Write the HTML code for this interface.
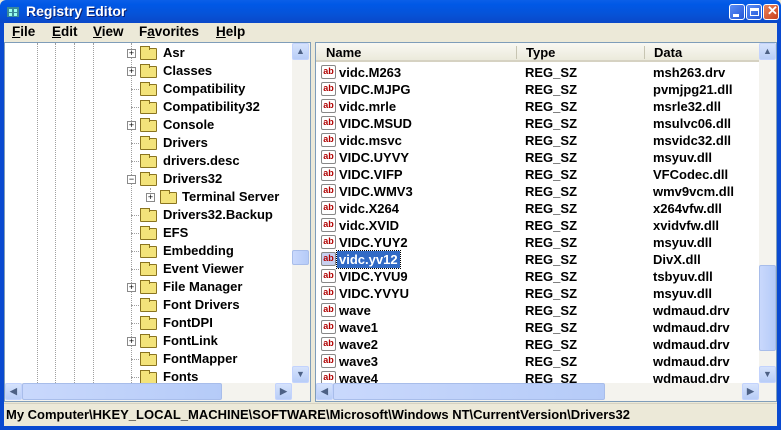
<!DOCTYPE html>
<html><head><meta charset="utf-8"><style>
*{margin:0;padding:0;box-sizing:border-box}
body{width:781px;height:430px;overflow:hidden;background:#ece9d8;font-family:Tahoma,"Liberation Sans",sans-serif;font-weight:bold;font-size:13px;color:#000;position:relative}
.abs{position:absolute}
#title{left:0;top:0;width:781px;height:23px;background:linear-gradient(#0a5fe8,#0058e6 20%,#0653d8 60%,#0a48c8);border-radius:6px 6px 0 0}
#title span{position:absolute;left:26px;top:3px;color:#fff;font-size:14px;font-family:"Liberation Sans",sans-serif;text-shadow:1px 1px #0a1e70}
.btn{position:absolute;top:4px;width:16px;height:16px;border:1px solid #fff;border-radius:3px;background:linear-gradient(135deg,#5b8cf5,#2459d8)}
#frameL{left:0;top:23px;width:4px;height:407px;background:#0a4ad0}
#frameR{left:777px;top:23px;width:4px;height:407px;background:#0a4ad0}
#frameB{left:0;top:426px;width:781px;height:4px;background:#0a4ad0}
#menu{left:4px;top:24px;height:18px}
#menu span{position:absolute;top:0;font-family:"Liberation Sans",sans-serif;font-size:13.5px;font-weight:bold}
.pane{background:#fff;border:1px solid #7f9db9}
.row{position:absolute;height:18px;line-height:18px;white-space:nowrap}
.fold{position:absolute;width:17px;height:12px;top:3px;background:#f3e37a;border:1px solid #8a7420;border-radius:1px}
.fold:before{content:"";position:absolute;left:-1px;top:-3px;width:8px;height:3px;background:#f3e37a;border:1px solid #8a7420;border-bottom:none}
.pl{position:absolute;width:9px;height:9px;border:1px solid #8a8a8a;background:#fff;font-size:9px;line-height:7px;text-align:center;font-weight:normal}
.dot{position:absolute;border-left:1px dotted #a0a0a0}
.hd{position:absolute;border-top:1px dotted #a0a0a0;width:10px}
.ab{position:absolute;width:15px;height:14px;top:2px;border:1px solid #888;border-radius:2px;background:#fff;color:#b00000;font-size:9px;line-height:11px;text-align:center;font-family:"Liberation Sans",sans-serif}
.sb{background:#f4f3ee}
.arr{position:absolute;width:17px;height:17px;background:linear-gradient(#d6e3fc,#b8cdf7);border:1px solid #c3d3fd;border-radius:2px;color:#4d6185;font-size:9px;text-align:center;line-height:15px}
.thumb{position:absolute;background:linear-gradient(90deg,#c9d8fc,#b5cbf8);border:1px solid #a8bdea;border-radius:2px}
</style></head><body>
<div id="title" class="abs">
<svg class="abs" style="left:5px;top:3px" width="17" height="17"><rect x="2" y="4" width="12" height="10" fill="#3a8a9a"/><rect x="4" y="6" width="3" height="3" fill="#9fe"/><rect x="9" y="6" width="3" height="3" fill="#9fe"/><rect x="4" y="10" width="3" height="3" fill="#9fe"/><rect x="9" y="10" width="3" height="3" fill="#9fe"/></svg>
<span>Registry Editor</span>
<div class="btn" style="left:729px"><div class="abs" style="left:3px;top:9px;width:6px;height:3px;background:#fff"></div></div>
<div class="btn" style="left:746px"><div class="abs" style="left:3px;top:3px;width:9px;height:8px;border:1px solid #fff;border-top-width:3px"></div></div>
<div class="btn" style="left:763px;background:linear-gradient(135deg,#e8845c,#c8401c)"><span style="left:3px;top:-2px;font-size:13px;text-shadow:none">✕</span></div>
</div>
<div id="frameL" class="abs"></div><div id="frameR" class="abs"></div><div id="frameB" class="abs"></div>
<div id="menu" class="abs">
<span style="left:8px"><u>F</u>ile</span><span style="left:48px"><u>E</u>dit</span><span style="left:89px"><u>V</u>iew</span><span style="left:135px">F<u>a</u>vorites</span><span style="left:212px"><u>H</u>elp</span>
</div>

<div class="abs pane" style="left:4px;top:42px;width:307px;height:360px"></div>
<div class="abs" style="left:5px;top:43px;width:287px;height:340px;overflow:hidden">
<div class="dot" style="left:32px;top:0;height:340px"></div>
<div class="dot" style="left:50px;top:0;height:340px"></div>
<div class="dot" style="left:69px;top:0;height:340px"></div>
<div class="dot" style="left:88px;top:0;height:340px"></div>
<div class="dot" style="left:126px;top:0;height:340px"></div>
<div class="dot" style="left:145px;top:145px;height:12px"></div>
</div>
<div class="abs" style="left:0;top:0" id="tree"></div>

<div class="abs pane" style="left:315px;top:42px;width:462px;height:360px"></div>
<div class="abs" style="left:316px;top:43px;width:443px;height:19px;background:linear-gradient(#f9f8f3,#ebeadb);border-bottom:2px solid #d6d2c2">
<span class="abs" style="left:10px;top:2px">Name</span>
<div class="abs" style="left:200px;top:3px;height:13px;border-left:1px solid #c7c5b2"></div>
<span class="abs" style="left:210px;top:2px">Type</span>
<div class="abs" style="left:328px;top:3px;height:13px;border-left:1px solid #c7c5b2"></div>
<span class="abs" style="left:338px;top:2px">Data</span>
</div>
<div id="list"></div>

<div class="abs sb" style="left:292px;top:43px;width:18px;height:340px"></div>
<div class="arr" style="left:292px;top:43px">▲</div>
<div class="arr" style="left:292px;top:366px">▼</div>
<div class="thumb" style="left:292px;top:250px;width:17px;height:15px"></div>
<div class="abs sb" style="left:5px;top:383px;width:305px;height:18px"></div>
<div class="arr" style="left:5px;top:383px">◀</div>
<div class="arr" style="left:275px;top:383px">▶</div>
<div class="thumb" style="left:22px;top:383px;width:200px;height:17px"></div>
<div class="abs sb" style="left:759px;top:43px;width:17px;height:340px"></div>
<div class="arr" style="left:759px;top:43px">▲</div>
<div class="arr" style="left:759px;top:366px">▼</div>
<div class="thumb" style="left:759px;top:265px;width:17px;height:86px"></div>
<div class="abs sb" style="left:316px;top:383px;width:460px;height:18px"></div>
<div class="arr" style="left:316px;top:383px">◀</div>
<div class="arr" style="left:742px;top:383px">▶</div>
<div class="thumb" style="left:333px;top:383px;width:272px;height:17px"></div>

<div class="abs" style="left:4px;top:403px;width:773px;height:23px;border-top:1px solid #d6d2c2"></div>
<span class="abs" style="left:6px;top:407px;font-size:13px">My Computer\HKEY_LOCAL_MACHINE\SOFTWARE\Microsoft\Windows NT\CurrentVersion\Drivers32</span>

<script>
var t=[["Asr",1],["Classes",1],["Compatibility",0],["Compatibility32",0],["Console",1],["Drivers",0],["drivers.desc",0],["Drivers32",2],["Terminal Server",3],["Drivers32.Backup",0],["EFS",0],["Embedding",0],["Event Viewer",0],["File Manager",1],["Font Drivers",0],["FontDPI",0],["FontLink",1],["FontMapper",0],["Fonts",0]];
var h="";
t.forEach(function(r,i){var y=44+i*18;var sub=r[1]==3;var px=sub?146:127,fx=sub?160:140,tx=sub?182:163;
if(r[1]==1||r[1]==2||r[1]==3)h+='<div class="pl" style="left:'+px+'px;top:'+(y+5)+'px">'+(r[1]==2?'−':'+')+'</div>';
else h+='<div class="hd" style="left:'+(px+4)+'px;top:'+(y+9)+'px"></div>';
h+='<div class="fold" style="left:'+fx+'px;top:'+(y+4)+'px"></div><div class="row" style="left:'+tx+'px;top:'+y+'px">'+r[0]+'</div>';});
document.getElementById("tree").innerHTML=h;
var L=[["vidc.M263","msh263.drv"],["VIDC.MJPG","pvmjpg21.dll"],["vidc.mrle","msrle32.dll"],["VIDC.MSUD","msulvc06.dll"],["vidc.msvc","msvidc32.dll"],["VIDC.UYVY","msyuv.dll"],["VIDC.VIFP","VFCodec.dll"],["VIDC.WMV3","wmv9vcm.dll"],["vidc.X264","x264vfw.dll"],["vidc.XVID","xvidvfw.dll"],["VIDC.YUY2","msyuv.dll"],["vidc.yv12","DivX.dll"],["VIDC.YVU9","tsbyuv.dll"],["VIDC.YVYU","msyuv.dll"],["wave","wdmaud.drv"],["wave1","wdmaud.drv"],["wave2","wdmaud.drv"],["wave3","wdmaud.drv"],["wave4","wdmaud.drv"]];
h="";
L.forEach(function(r,i){var y=64+i*17;var s=i==11;
h+='<div class="ab" style="left:321px;top:'+(y+1)+'px;'+(s?'background:#c8d0f0;':'')+'">ab</div>';
h+='<div class="row" style="left:337px;top:'+y+'px;height:17px;line-height:17px;padding:0 2px;'+(s?'background:#316ac5;color:#fff;outline:1px dotted #000;':'')+'">'+r[0]+'</div>';
h+='<div class="row" style="left:525px;top:'+y+'px;height:17px;line-height:17px">REG_SZ</div>';
h+='<div class="row" style="left:653px;top:'+y+'px;height:17px;line-height:17px">'+r[1]+'</div>';});
document.getElementById("list").innerHTML=h;
</script>
</body></html>
